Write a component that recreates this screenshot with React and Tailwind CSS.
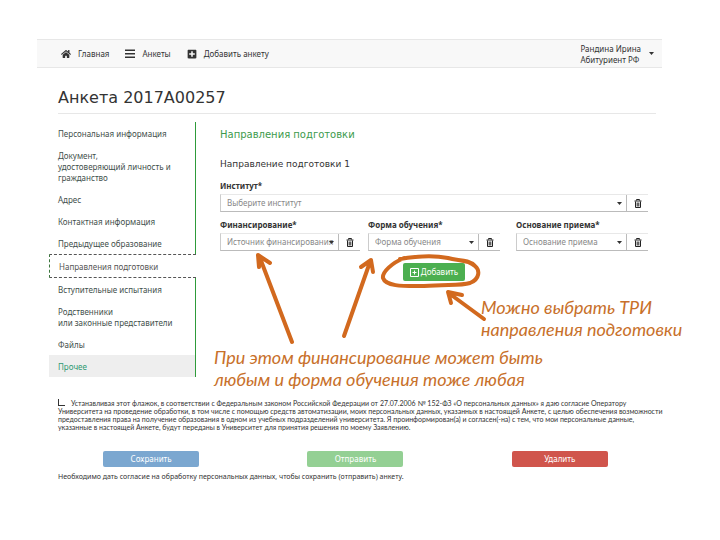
import { FaHome, FaPlusSquare } from "react-icons/fa";

const menuItems = [
    { lines: ["Персональная информация"] },
    { lines: ["Документ,", "удостоверяющий личность и", "гражданство"] },
    { lines: ["Адрес"] },
    { lines: ["Контактная информация"] },
    { lines: ["Предыдущее образование"] },
    { lines: ["Направления подготовки"], state: "active" },
    { lines: ["Вступительные испытания"] },
    { lines: ["Родственники", "или законные представители"] },
    { lines: ["Файлы"] },
    { lines: ["Прочее"], state: "hover" },
];

const itemStyles = {
    active: "border-y border-l border-dashed border-y-[#555] border-l-[#3c763d] text-[#555]",
    hover: "border-r border-[#2e9b3a] bg-[#eeeeee] text-[#2f9a72]",
    normal: "border-r border-[#2e9b3a] text-[#3f4f4b]",
};

const agreement = [
    "Устанавливая этот флажок, в соответствии с Федеральным законом Российской Федерации от 27.07.2006 № 152-ФЗ «О персональных данных» я даю согласие Оператору",
    "Университета на проведение обработки, в том числе с помощью средств автоматизации, моих персональных данных, указанных в настоящей Анкете, с целью обеспечения возможности",
    "предоставления права на получение образования в одном из учебных подразделений университета. Я проинформирован(а) и согласен(-на) с тем, что мои персональные данные,",
    "указанные в настоящей Анкете, будут переданы в Университет для принятия решения по моему Заявлению.",
];

const Caret = () => (
    <svg viewBox="0 0 5 3" className="h-[3px] w-[5px]" fill="#333">
        <path d="M0 0h5L2.500 3z" />
    </svg>
);

const BarsIcon = () => (
    <svg viewBox="0 0 10 9" className="h-[9px] w-[10px]" fill="currentColor">
        <path d="M0 .5h10v1.500H0zM0 4h10v1.500H0zM0 7.500h10V9H0z" />
    </svg>
);

const TrashIcon = () => (
    <svg viewBox="0 0 8 9" className="h-[9px] w-[8px]" fill="none" stroke="currentColor">
        <path d="M.5 2h7M2.500 1.500v-1h3v1" />
        <path d="M1.500 2.500v6h5v-6M3.200 3.500v4M4.800 3.500v4" />
    </svg>
);

const AddIcon = () => (
    <svg viewBox="0 0 9 9" className="size-[9px]" fill="none" stroke="currentColor">
        <path d="M.5.5h8v8h-8zM4.500 2.500v4M2.500 4.500h4" />
    </svg>
);

const Navbar = () => (
    <nav className="flex h-[29px] items-center border-y border-[#e7e7e7] bg-[#f8f8f8] pl-6 pr-2 text-[8px] text-[#333]">
        <a href="#home" className="flex items-center gap-[7px]">
            <FaHome className="text-[10px]" />
            Главная
        </a>
        <a href="#forms" className="ml-4 flex items-center gap-[7px]">
            <BarsIcon />
            Анкеты
        </a>
        <a href="#add" className="ml-4 flex items-center gap-[7px]">
            <FaPlusSquare className="text-[10px]" />
            Добавить анкету
        </a>
        <button type="button" className="ml-auto flex items-center gap-2 text-left leading-[11px]">
            <span>
                Рандина Ирина
                <br />
                Абитуриент РФ
            </span>
            <Caret />
        </button>
    </nav>
);

const SideMenu = () => (
    <ul className="w-[147px] shrink-0 text-[8px] leading-[11px]">
        {menuItems.map(({ lines, state = "normal" }) => (
            <li key={lines[0]} className={itemStyles[state]}>
                <a href="#section" className="block pt-[6px] pb-[5px] pl-[9px] whitespace-nowrap">
                    {lines.map((line) => (
                        <span key={line} className="block">{line}</span>
                    ))}
                </a>
            </li>
        ))}
    </ul>
);

const SelectField = ({ id, label, placeholder, className }) => (
    <div className={className}>
        <label htmlFor={id} className="block text-[8px] leading-[16px] font-bold text-[#333]">
            {label}*
        </label>
        <div className="flex h-[18px] border-y border-l border-t-[#e8e8e8] border-b-[#bbb] border-l-[#ccc]">
            <div className="relative min-w-0 flex-1">
                <select
                    id={id}
                    className="block h-full w-full appearance-none pl-[6px] text-[8px] text-[#888] outline-none"
                >
                    <option>{placeholder}</option>
                </select>
                <span className="pointer-events-none absolute inset-y-0 right-1 flex items-center">
                    <Caret />
                </span>
            </div>
            <button
                type="button"
                aria-label="Удалить"
                className="flex w-[22px] items-center justify-center border-l border-[#bbb] text-[#222]"
            >
                <TrashIcon />
            </button>
        </div>
    </div>
);

// Hand-drawn arrows and the loop around the add button
const Marks = () => (
    <svg
        viewBox="0 0 300 110"
        className="pointer-events-none absolute top-[124px] left-6 h-[110px] w-[300px]"
        fill="none"
        stroke="#d2691e"
        strokeWidth="4"
        strokeLinecap="round"
        strokeLinejoin="round"
    >
        <path d="M72 96L40 12M39 21l-1-12 12 8" />
        <path d="M124 90L150 16M141 21l10-7 2 12" />
        <path d="M264 73L230 48M231 57l-3-11 14 3" />
        <path d="M184 12C172 17 162 26 163 32C166 41 185 40 204 40C226 38 240 40 250 37C260 33 260 24 255 20C248 13 238 15 228 12C212 9 192 11 180 13" />
    </svg>
);

export default function App() {
    return (
        <div className="min-h-screen bg-white pt-[39px] pr-[58px] pb-10 pl-[37px] font-['Noto_Sans',sans-serif] text-[#333]">
            <Navbar />
            <main className="pl-3">
                <h1 className="mr-[6px] ml-[9px] border-b border-[#e7e7e7] pt-5 pb-[5px] font-['DejaVu_Sans',sans-serif] text-[16px] leading-5">
                    Анкета 2017A00257
                </h1>
                <div className="mt-2 flex">
                    <SideMenu />
                    <section className="relative min-w-0 flex-1 pr-[14px] pl-6">
                        <h2 className="pt-1 font-['DejaVu_Sans',sans-serif] text-[10px] leading-[18px] text-[#3c9a4c]">
                            Направления подготовки
                        </h2>
                        <h3 className="pt-3 font-['DejaVu_Sans',sans-serif] text-[9px] leading-4">
                            Направление подготовки 1
                        </h3>
                        <div className="mt-[6px]">
                            <SelectField id="institute" label="Институт" placeholder="Выберите институт" />
                        </div>
                        <div className="mt-[5px] grid grid-cols-[148fr_148fr_132fr]">
                            <SelectField
                                id="funding"
                                label="Финансирование"
                                placeholder="Источник финансирования"
                                className="pr-2"
                            />
                            <SelectField
                                id="form"
                                label="Форма обучения"
                                placeholder="Форма обучения"
                                className="pr-4"
                            />
                            <SelectField id="basis" label="Основание приема" placeholder="Основание приема" />
                        </div>
                        <div className="mt-3 flex justify-center">
                            <button
                                type="button"
                                className="flex h-[18px] items-center gap-[2px] rounded-[2px] bg-[#4caf50] px-[7px] text-[8px] text-white"
                            >
                                <AddIcon />
                                Добавить
                            </button>
                        </div>
                        <div className="font-[Lato,sans-serif] text-[18px] leading-[22px] whitespace-nowrap text-[#c8702a] italic">
                            <p className="mt-[15px] ml-[261px]">
                                Можно выбрать ТРИ
                                <br />
                                направления подготовки
                            </p>
                            <p className="mt-[6px] -ml-[6px]">
                                При этом финансирование может быть
                                <br />
                                любым и форма обучения тоже любая
                            </p>
                        </div>
                        <Marks />
                    </section>
                </div>
                <label className="mt-[9px] ml-[9px] block font-[Lato,sans-serif] text-[7px] leading-[8px] whitespace-nowrap">
                    <input
                        type="checkbox"
                        className="mr-[6px] size-[7px] appearance-none border-b border-l border-[#333]"
                    />
                    {agreement.map((line) => (
                        <span key={line}>
                            {line}
                            <br />
                        </span>
                    ))}
                </label>
                <div className="mt-5 grid grid-cols-3 justify-items-center text-[8px] text-white">
                    <button type="button" className="h-4 w-24 rounded-[2px] bg-[#7ba7d0]">Сохранить</button>
                    <button type="button" className="h-4 w-24 rounded-[2px] bg-[#94d094]">Отправить</button>
                    <button type="button" className="h-4 w-24 rounded-[2px] bg-[#d0554c]">Удалить</button>
                </div>
                <p className="mt-1 ml-[9px] text-[7px] leading-3">
                    Необходимо дать согласие на обработку персональных данных, чтобы сохранить (отправить) анкету.
                </p>
            </main>
        </div>
    );
}
